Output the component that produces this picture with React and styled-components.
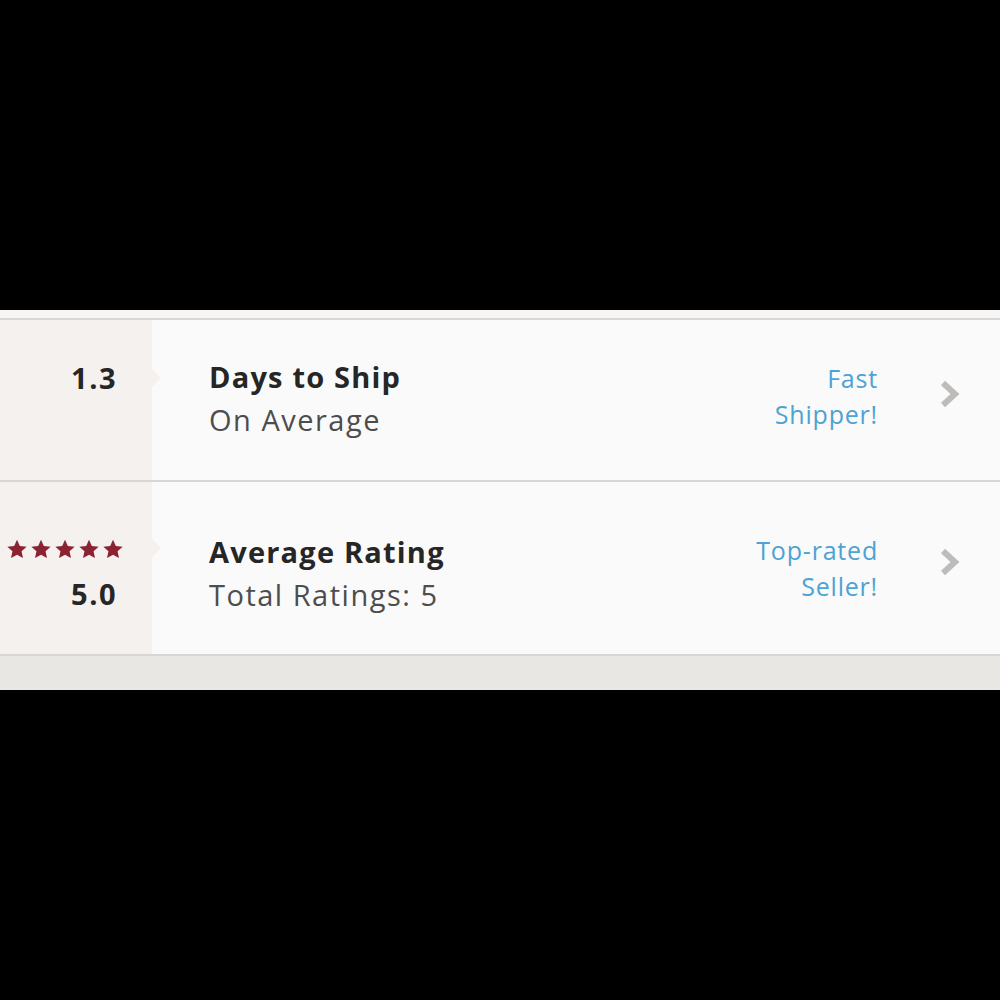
import React from 'react';
import styled, { createGlobalStyle } from 'styled-components';

const GlobalStyle = createGlobalStyle`
  html, body {
    margin: 0;
    padding: 0;
    background: #000;
  }
  body {
    font-family: "Open Sans", Lato, sans-serif;
  }
`;

const Screen = styled.div`
  width: 1000px;
  height: 1000px;
  display: flex;
  flex-direction: column;
  background: #000;
`;

const Spacer = styled.div`
  height: ${(props) => props.size}px;
  flex-shrink: 0;
`;

const Panel = styled.div`
  display: flex;
  flex-direction: column;
  background: #fbfafa;
`;

const TopStrip = styled.div`
  height: 8px;
  background: #f6f5f3;
  border-bottom: 2px solid #d9d7d5;
`;

const Row = styled.div`
  display: flex;
  height: ${(props) => props.height}px;
  border-bottom: 2px solid #d9d7d5;
`;

const Stat = styled.div`
  position: relative;
  width: 152px;
  flex-shrink: 0;
  background: #f4f1ee;
  display: flex;
  flex-direction: column;
  align-items: flex-end;
  justify-content: center;
  padding-right: 35px;
  box-sizing: border-box;
  gap: 20px;
  padding-bottom: ${(props) => props.shift || 0}px;
  padding-top: ${(props) => props.lift || 0}px;

  &::after {
    content: '';
    position: absolute;
    right: -9px;
    top: ${(props) => props.arrowTop}px;
    border-top: 9px solid transparent;
    border-bottom: 9px solid transparent;
    border-left: 9px solid #f4f1ee;
  }
`;

const StatValue = styled.div`
  font-size: 29px;
  font-weight: 700;
  letter-spacing: 1.5px;
  color: #262626;
  line-height: 1;
`;

const Stars = styled.div`
  display: flex;
  gap: 2px;
  margin-right: -7px;
`;

const Body = styled.div`
  flex: 1;
  display: flex;
  align-items: center;
  padding-left: 57px;
  padding-right: 38px;
`;

const Info = styled.div`
  flex: 1;
  display: flex;
  flex-direction: column;
  gap: 6px;
  padding-bottom: ${(props) => props.shift || 0}px;
  padding-top: ${(props) => props.lift || 0}px;
`;

const Title = styled.div`
  font-size: 29px;
  font-weight: 700;
  letter-spacing: 1.2px;
  color: #262626;
  line-height: 37px;
`;

const Subtitle = styled.div`
  font-size: 29px;
  font-weight: 400;
  letter-spacing: 1.5px;
  color: #4d4d4d;
  line-height: 37px;
`;

const Badge = styled.div`
  font-size: 25px;
  letter-spacing: 0.8px;
  color: #4da3d3;
  text-align: right;
  line-height: 36px;
  margin-right: 60px;
  padding-bottom: ${(props) => props.shift || 0}px;
`;

const Chevron = styled.svg`
  width: 24px;
  height: 32px;
  flex-shrink: 0;
  padding-bottom: ${(props) => props.shift || 0}px;
`;

const Footer = styled.div`
  height: 34px;
  background: #e9e7e3;
`;

const Star = () => (
  <svg width="22" height="20" viewBox="0 0 24 22">
    <path
      d="M12 0.8l3.1 6.9 7.5.8-5.6 5.1 1.6 7.4L12 17.2l-6.6 3.8 1.6-7.4-5.6-5.1 7.5-.8z"
      fill="#8a2232"
    />
  </svg>
);

const ChevronIcon = ({ shift }) => (
  <Chevron viewBox="0 0 24 32" shift={shift}>
    <path d="M5 5l12 11L5 27" fill="none" stroke="#bdbcba" strokeWidth="6" />
  </Chevron>
);

const App = () => (
  <Screen>
    <GlobalStyle />
    <Spacer size={310} />
    <Panel>
      <TopStrip />
      <Row height={160}>
        <Stat arrowTop={49} shift={46}>
          <StatValue>1.3</StatValue>
        </Stat>
        <Body>
          <Info shift={4}>
            <Title>Days to Ship</Title>
            <Subtitle>On Average</Subtitle>
          </Info>
          <Badge shift={8}>
            Fast
            <br />
            Shipper!
          </Badge>
          <ChevronIcon shift={12} />
        </Body>
      </Row>
      <Row height={172}>
        <Stat arrowTop={57} lift={10}>
          <Stars>
            <Star />
            <Star />
            <Star />
            <Star />
            <Star />
          </Stars>
          <StatValue>5.0</StatValue>
        </Stat>
        <Body>
          <Info lift={10}>
            <Title>Average Rating</Title>
            <Subtitle>Total Ratings: 5</Subtitle>
          </Info>
          <Badge>
            Top-rated
            <br />
            Seller!
          </Badge>
          <ChevronIcon shift={12} />
        </Body>
      </Row>
      <Footer />
    </Panel>
  </Screen>
);

export default App;
